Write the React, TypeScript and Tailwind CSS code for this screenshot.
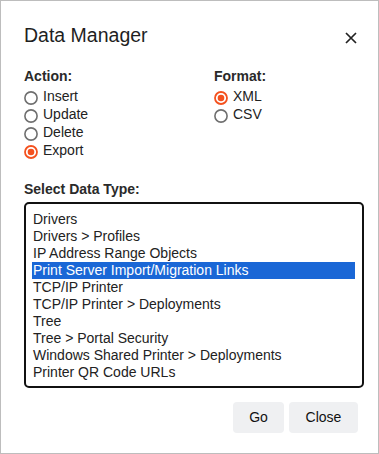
const actions = ["Insert", "Update", "Delete", "Export"];
const formats = ["XML", "CSV"];
const dataTypes = [
  "Drivers",
  "Drivers > Profiles",
  "IP Address Range Objects",
  "Print Server Import/Migration Links",
  "TCP/IP Printer",
  "TCP/IP Printer > Deployments",
  "Tree",
  "Tree > Portal Security",
  "Windows Shared Printer > Deployments",
  "Printer QR Code URLs",
];

function Radio({ label, checked }: { label: string; checked?: boolean }) {
  return (
    <label className="flex h-[18px] items-start gap-[5px] leading-[18px]">
      <svg width="14" height="14" viewBox="0 0 14 14" className="mt-[4px] shrink-0">
        {checked ? (
          <>
            <circle cx="7" cy="7" r="6" fill="white" stroke="#f4511e" strokeWidth="1.8" />
            <circle cx="7" cy="7" r="3.3" fill="#f4511e" />
          </>
        ) : (
          <circle cx="7" cy="7" r="6.1" fill="white" stroke="#6f6f6f" strokeWidth="1.6" />
        )}
      </svg>
      <span>{label}</span>
    </label>
  );
}

export default function App() {
  const selected = "Export";
  const format = "XML";
  const dataType = "Print Server Import/Migration Links";

  return (
    <div
      className="h-[454px] w-[379px] border border-[#bdbdbd] bg-white pt-[22px] pr-[14px] pl-[23px] text-[14px] text-[#222]"
      style={{ fontFamily: '"Liberation Sans", Arial, sans-serif' }}
    >
      <div className="flex items-start justify-between">
        <h1 className="text-[19.5px] leading-[24px] text-[#1f1f1f]">Data Manager</h1>
        <svg width="12" height="12" viewBox="0 0 12 12" className="mt-[9px] mr-[7px]">
          <path d="M1 1 L11 11 M11 1 L1 11" stroke="#222" strokeWidth="1.7" />
        </svg>
      </div>

      <div className="mt-[20px] flex">
        <div className="w-[190px]">
          <div className="mb-[2px] font-bold leading-[18px] text-[#2a2a2a]">Action:</div>
          {actions.map((a) => (
            <Radio key={a} label={a} checked={a === selected} />
          ))}
        </div>
        <div>
          <div className="mb-[2px] font-bold leading-[18px] text-[#2a2a2a]">Format:</div>
          {formats.map((f) => (
            <Radio key={f} label={f} checked={f === format} />
          ))}
        </div>
      </div>

      <div className="mt-[21px] font-bold leading-[18px] text-[#2a2a2a]">Select Data Type:</div>
      <div className="mt-[4px] h-[186px] rounded-[5px] border-2 border-[#111] pt-[7px] pr-[7px] pb-[5px] pl-[6px]">
        {dataTypes.map((d) => (
          <div
            key={d}
            className={[
              "h-[17px] pl-[1px] leading-[17px] whitespace-nowrap",
              d === dataType ? "bg-[#1a67d6] text-white" : "text-[#222]",
            ].join(" ")}
          >
            {d}
          </div>
        ))}
      </div>

      <div className="mt-[14px] mr-[6px] flex justify-end gap-[5px]">
        <button className="h-[31px] w-[51px] rounded-[4px] bg-[#eff0f2] text-[#111]">Go</button>
        <button className="h-[31px] w-[69px] rounded-[4px] bg-[#eff0f2] text-[#111]">Close</button>
      </div>
    </div>
  );
}
